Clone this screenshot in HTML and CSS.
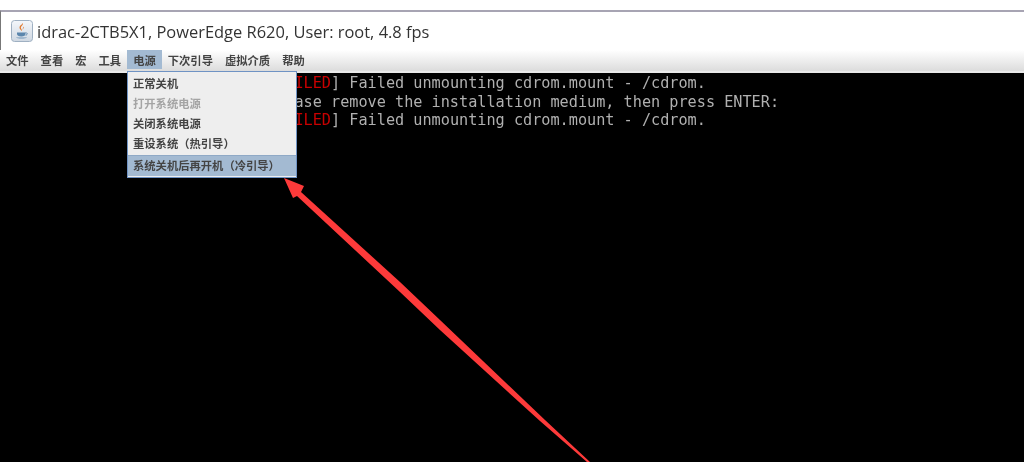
FILE: index.html
```html
<!DOCTYPE html>
<html lang="zh">
<head>
<meta charset="utf-8">
<title>iDRAC console</title>
<link rel="stylesheet" href="styles.css">
</head>
<body>
<div class="gap"></div>
<div class="window">
  <header class="titlebar">
    <svg class="java" width="22" height="22" viewBox="0 0 22 22">
      <defs>
        <linearGradient id="tile" x1="0" y1="0" x2="0" y2="1">
          <stop offset="0" stop-color="#f4f7fb"/>
          <stop offset="1" stop-color="#cfd8e2"/>
        </linearGradient>
      </defs>
      <rect x="0.5" y="0.5" width="21" height="21" rx="3" fill="url(#tile)" stroke="#9fb0c2"/>
      <path d="M11.5 3c1.5 2-2 3-1.6 5 .2 1 1 1.500 1.200 3-1.800-1-3-2.500-2.500-4.200C9 5.300 11 4.800 11.500 3zM13 6.500c.3 1.300-1.300 2-1 3.500-.6-1.300.1-2.800 1-3.500z" fill="#e0762a"/>
      <path d="M6 12.500h8.500v1.200c0 1.800-1.500 2.800-4.200 2.800S6 15.500 6 13.700z" fill="#5b86ad"/>
      <path d="M14.500 12.800c2 -.3 2.500 1.700.2 2.500" fill="none" stroke="#5b86ad" stroke-width="1"/>
      <path d="M5 17.500h11c-1 1.300-10 1.300-11 0z" fill="#6f94b8"/>
    </svg>
    <span class="title">idrac-2CTB5X1, PowerEdge R620, User: root, 4.8 fps</span>
  </header>
  <nav class="menubar">
    <span class="menu-item">文件</span>
    <span class="menu-item">查看</span>
    <span class="menu-item">宏</span>
    <span class="menu-item">工具</span>
    <span class="menu-item active">电源</span>
    <span class="menu-item">下次引导</span>
    <span class="menu-item">虚拟介质</span>
    <span class="menu-item">帮助</span>
  </nav>
  <main class="console">
    <div class="line"><span class="failed">[FAILED</span>] Failed unmounting cdrom.mount - /cdrom.</div>
    <div class="line">Please remove the installation medium, then press ENTER:</div>
    <div class="line"><span class="failed">[FAILED</span>] Failed unmounting cdrom.mount - /cdrom.</div>
  </main>
</div>
<ul class="dropdown">
  <li class="drop-item">正常关机</li>
  <li class="drop-item disabled">打开系统电源</li>
  <li class="drop-item">关闭系统电源</li>
  <li class="drop-item">重设系统（热引导）</li>
  <li class="drop-item selected">系统关机后再开机（冷引导）</li>
</ul>
<svg class="arrow" width="1024" height="462" viewBox="0 0 1024 462">
  <polygon points="284,178 304,186 301,192 400,282 440,320 545,420 590,462 587,462 540,421 440,330 400,292 297,196 293,198" fill="#fd3a3a"/>
</svg>
</body>
</html>
```

FILE: styles.css
```css
html, body {
  margin: 0;
  padding: 0;
  height: 462px;
  overflow: hidden;
  background: #fff;
}

body {
  position: relative;
  font-family: "Noto Sans CJK SC", sans-serif;
}

.gap {
  height: 10px;
  background: #fff;
}

.window {
  height: 452px;
  display: flex;
  flex-direction: column;
  border-top: 2px solid #a7a4b3;
  border-left: 1px solid #777;
  box-sizing: border-box;
}

.titlebar {
  height: 38px;
  display: flex;
  align-items: center;
  gap: 4px;
  padding-left: 10px;
  background: #fff;
  box-sizing: border-box;
}

.java {
  flex: none;
  filter: blur(0.3px);
}

.title {
  font-family: "Open Sans", sans-serif;
  font-size: 16.45px;
  color: #333;
  white-space: nowrap;
  filter: blur(0.3px);
}

.menubar {
  height: 23px;
  display: flex;
  margin-left: -1px;
  box-sizing: border-box;
  padding-bottom: 2px;
  background: linear-gradient(#ffffff, #dcdcdc);
  border-bottom: 2px solid #e9e9e9;
}

.menu-item {
  padding: 0 6px;
  font-size: 11.3px;
  font-weight: 700;
  line-height: 21px;
  color: #444;
  white-space: nowrap;
  filter: blur(0.3px);
}

.menu-item.active {
  background: #a3bad2;
}

.console {
  flex: 1;
  background: #000;
  margin-left: -1px;
  padding: 1px 0 0 267px;
  font-family: "DejaVu Sans Mono", monospace;
  font-size: 15.2px;
  line-height: 18.5px;
  color: #b0b0b0;
}

.line {
  white-space: pre;
  filter: blur(0.3px);
}

.failed {
  color: #c80000;
}

.dropdown {
  position: absolute;
  left: 127px;
  top: 71px;
  width: 170px;
  height: 107px;
  box-sizing: border-box;
  margin: 0;
  padding: 2px 0 1px;
  list-style: none;
  background: #eeeeee;
  border: 1px solid #6f93c4;
  display: flex;
  flex-direction: column;
}

.drop-item {
  height: 20px;
  padding-left: 5px;
  font-size: 11.3px;
  font-weight: 700;
  line-height: 18px;
  color: #444;
  white-space: nowrap;
  filter: blur(0.3px);
}

.drop-item.disabled {
  color: #a4a4a4;
}

.drop-item.selected {
  height: 21px;
  margin-top: 1px;
  line-height: 19px;
  background: #a3bad2;
  color: #444;
  border-top: 1px solid #8fa9c6;
  box-sizing: border-box;
}

.arrow {
  position: absolute;
  left: 0;
  top: 0;
}
```
